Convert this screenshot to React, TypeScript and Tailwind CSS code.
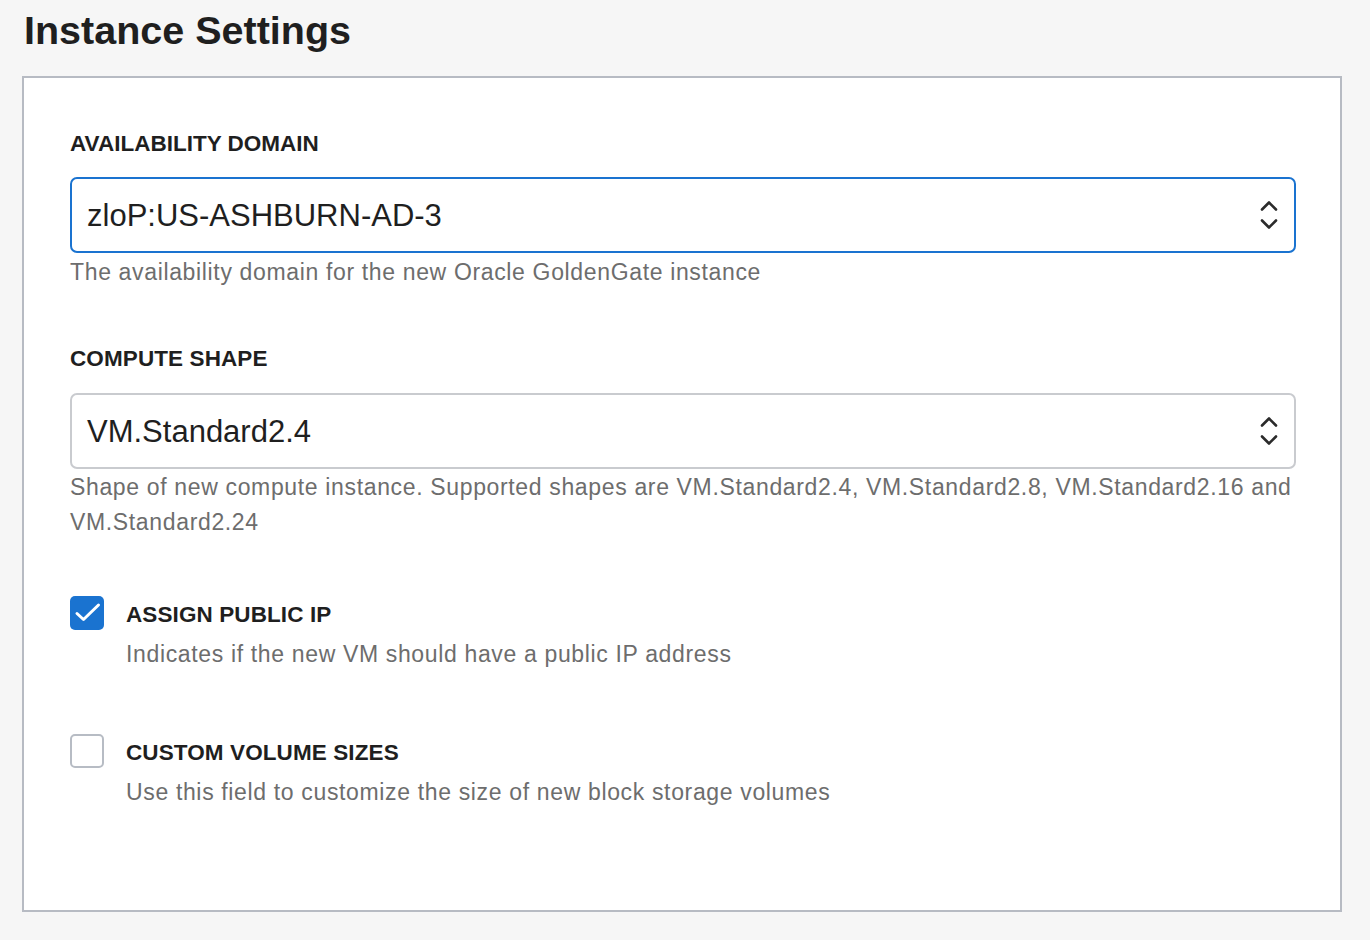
import React from 'react'

function Chevrons() {
    return (
        <svg width="20" height="32" viewBox="0 0 20 32" fill="none" stroke="#2b2b2b" strokeWidth={2.6} strokeLinecap="round" strokeLinejoin="round">
            <path d="M3 10.5 L10 3.5 L17 10.5" />
            <path d="M3 21.5 L10 28.5 L17 21.5" />
        </svg>
    )
}

function SelectBox({ value, focused }: { value: string; focused?: boolean }) {
    return (
        <div
            className={`flex h-[76px] items-center justify-between rounded-[7px] border-2 bg-white pl-[15px] pr-[15px] ${
                focused ? 'border-[#1a73d0]' : 'border-[#c9cbcf]'
            }`}
        >
            <span className="text-[31px] leading-none text-[#1f1f1f]">{value}</span>
            <Chevrons />
        </div>
    )
}

function CheckRow({ label, hint, checked }: { label: string; hint: string; checked?: boolean }) {
    return (
        <div className="flex gap-[22px]">
            <div
                className={`flex h-[34px] w-[34px] shrink-0 items-center justify-center rounded-[5px] ${
                    checked ? 'bg-[#1a73d0]' : 'border-2 border-[#b7bcc4] bg-white'
                }`}
            >
                {checked && (
                    <svg width="34" height="34" viewBox="0 0 34 34" fill="none" stroke="white" strokeWidth={3} strokeLinecap="round" strokeLinejoin="round">
                        <path d="M7 17.5 L13.5 23.5 L28.5 9" />
                    </svg>
                )}
            </div>
            <div>
                <div className="pt-[4px] text-[22.5px] font-bold leading-[30px] tracking-[0.1px] text-[#1f1f1f]">{label}</div>
                <div className="mt-[7px] text-[23px] leading-[35px] tracking-[0.65px] text-[#6d6d6d]">{hint}</div>
            </div>
        </div>
    )
}

export default function App() {
    return (
        <div className="h-[940px] w-[1370px] bg-[#f6f6f6] pt-[7px] font-['Liberation_Sans',Arial,sans-serif]">
            <h1 className="ml-[24px] text-[39.5px] font-bold leading-[46px] text-[#1f1f1f]">Instance Settings</h1>

            <div className="ml-[22px] mt-[23px] h-[836px] w-[1320px] border-2 border-[#b7bbc3] bg-white pl-[46px] pr-[44px] pt-[51px]">
                {/* Availability domain */}
                <div className="text-[22.5px] font-bold leading-[30px] text-[#1f1f1f]">AVAILABILITY DOMAIN</div>
                <div className="mt-[18px]">
                    <SelectBox value="zloP:US-ASHBURN-AD-3" focused />
                </div>
                <div className="pt-[2px] text-[23px] leading-[35px] tracking-[0.65px] text-[#6d6d6d]">
                    The availability domain for the new Oracle GoldenGate instance
                </div>

                {/* Compute shape */}
                <div className="mt-[54px] text-[22.5px] font-bold leading-[30px] tracking-[0.1px] text-[#1f1f1f]">COMPUTE SHAPE</div>
                <div className="mt-[19px]">
                    <SelectBox value="VM.Standard2.4" />
                </div>
                <div className="pt-[1px] text-[23px] leading-[35px] tracking-[0.65px] text-[#6d6d6d]">
                    Shape of new compute instance. Supported shapes are VM.Standard2.4, VM.Standard2.8, VM.Standard2.16 and VM.Standard2.24
                </div>

                {/* Checkboxes */}
                <div className="mt-[56px]">
                    <CheckRow label="ASSIGN PUBLIC IP" hint="Indicates if the new VM should have a public IP address" checked />
                </div>
                <div className="mt-[62px]">
                    <CheckRow label="CUSTOM VOLUME SIZES" hint="Use this field to customize the size of new block storage volumes" />
                </div>
            </div>
        </div>
    )
}
